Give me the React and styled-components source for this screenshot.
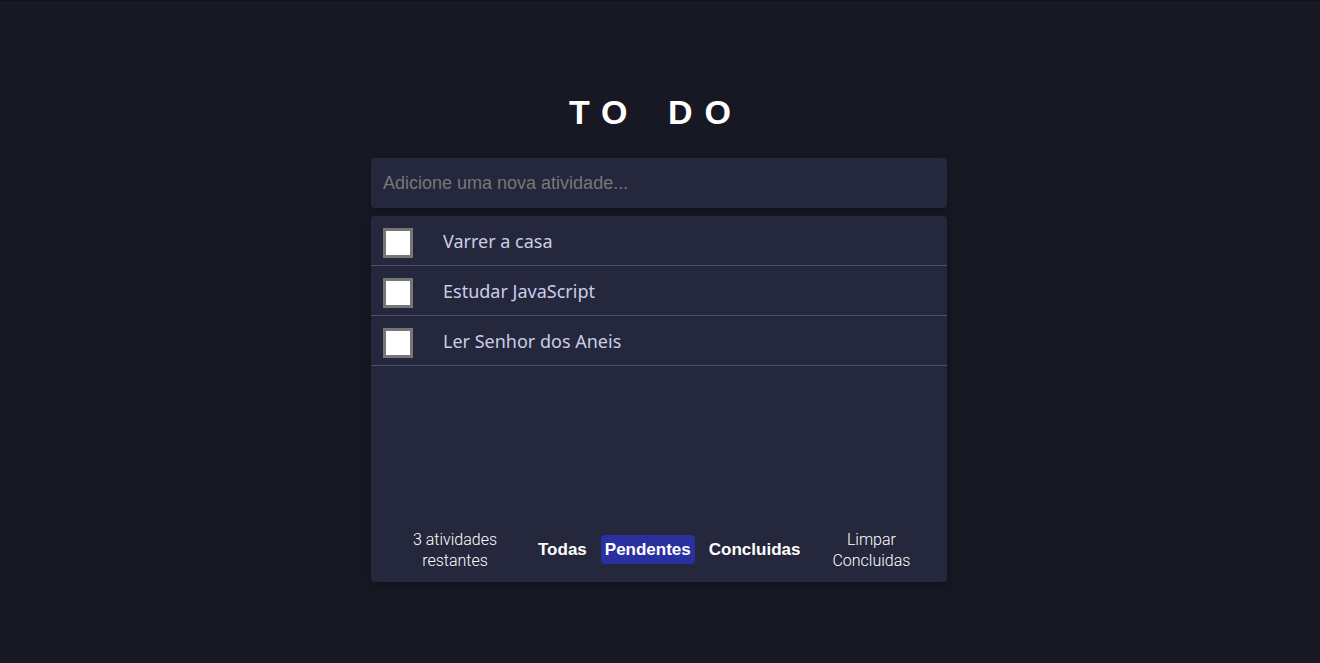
import React from "react";
import styled, { createGlobalStyle } from "styled-components";

const GlobalStyle = createGlobalStyle`
  html, body { margin: 0; padding: 0; }
  body {
    background: #181824;
    border-top: 1px solid #10101f;
    min-height: 662px;
    font-family: "Liberation Sans", Arial, sans-serif;
  }
`;

const Page = styled.main`
  display: flex;
  flex-direction: column;
  align-items: center;
  padding: 91px 2px 0 0;
`;

const Wrapper = styled.div`
  width: 576px;
  display: flex;
  flex-direction: column;
`;

const Title = styled.h1`
  margin: 0 0 26px;
  text-align: center;
  color: #ffffff;
  font-family: "Liberation Sans", Arial, sans-serif;
  font-weight: 700;
  font-size: 34px;
  line-height: 40px;
  letter-spacing: 12px;
  word-spacing: 7px;
  padding-right: 6px;
`;

const Input = styled.input`
  box-sizing: border-box;
  width: 100%;
  height: 50px;
  border: none;
  outline: none;
  border-radius: 4px;
  background: #25273c;
  color: #cacde8;
  padding: 0 12px;
  font-family: "Liberation Sans", Arial, sans-serif;
  font-size: 18px;
  box-shadow: 0 2px 6px rgba(0, 0, 0, 0.25);
  &::placeholder { color: #777777; }
`;

const Card = styled.section`
  margin-top: 8px;
  height: 366px;
  background: #25273c;
  border-radius: 4px;
  box-shadow: 0 3px 8px rgba(0, 0, 0, 0.35);
  display: flex;
  flex-direction: column;
`;

const List = styled.ul`
  list-style: none;
  margin: 0;
  padding: 0;
  flex: 1;
`;

const Row = styled.li`
  height: 50px;
  box-sizing: border-box;
  border-bottom: 1px solid #4d5071;
  display: flex;
  align-items: center;
  padding-left: 12px;
  gap: 30px;
`;

const Check = styled.span`
  box-sizing: border-box;
  width: 30px;
  height: 30px;
  margin-top: 4px;
  background: #ffffff;
  border: 3px solid #767676;
`;

const ItemText = styled.span`
  font-family: "Noto Sans", "Open Sans", sans-serif;
  font-size: 18px;
  color: #cacde8;
`;

const Footer = styled.footer`
  height: 66px;
  display: flex;
  align-items: center;
  padding: 1px 0 0 14px;
  box-sizing: border-box;
  color: #ffffff;
`;

const Info = styled.div`
  width: ${(p) => p.$w}px;
  text-align: center;
  font-family: Roboto, "Liberation Sans", sans-serif;
  font-weight: 300;
  font-size: 16px;
  line-height: 21px;
  color: #ffffff;
  margin-right: ${(p) => p.$mr || 0}px;
`;

const Filters = styled.div`
  display: flex;
  gap: 10px;
  margin-right: 4px;
`;

const FilterButton = styled.button`
  border: none;
  border-radius: 4px;
  padding: 4px 4px;
  background: ${(p) => (p.$active ? "#2a30a0" : "transparent")};
  color: #ffffff;
  font-family: "Liberation Sans", Arial, sans-serif;
  font-weight: 700;
  font-size: 17px;
  line-height: 21px;
  cursor: pointer;
`;

const tasks = ["Varrer a casa", "Estudar JavaScript", "Ler Senhor dos Aneis"];

export default function App() {
  return (
    <>
      <GlobalStyle />
      <Page>
        <Wrapper>
          <Title>TO DO</Title>
          <Input placeholder="Adicione uma nova atividade..." />
          <Card>
            <List>
              {tasks.map((t) => (
                <Row key={t}>
                  <Check />
                  <ItemText>{t}</ItemText>
                </Row>
              ))}
            </List>
            <Footer>
              <Info $w={140} $mr={9}>3 atividades<br />restantes</Info>
              <Filters>
                <FilterButton>Todas</FilterButton>
                <FilterButton $active>Pendentes</FilterButton>
                <FilterButton>Concluidas</FilterButton>
              </Filters>
              <Info $w={126}>Limpar<br />Concluidas</Info>
            </Footer>
          </Card>
        </Wrapper>
      </Page>
    </>
  );
}
